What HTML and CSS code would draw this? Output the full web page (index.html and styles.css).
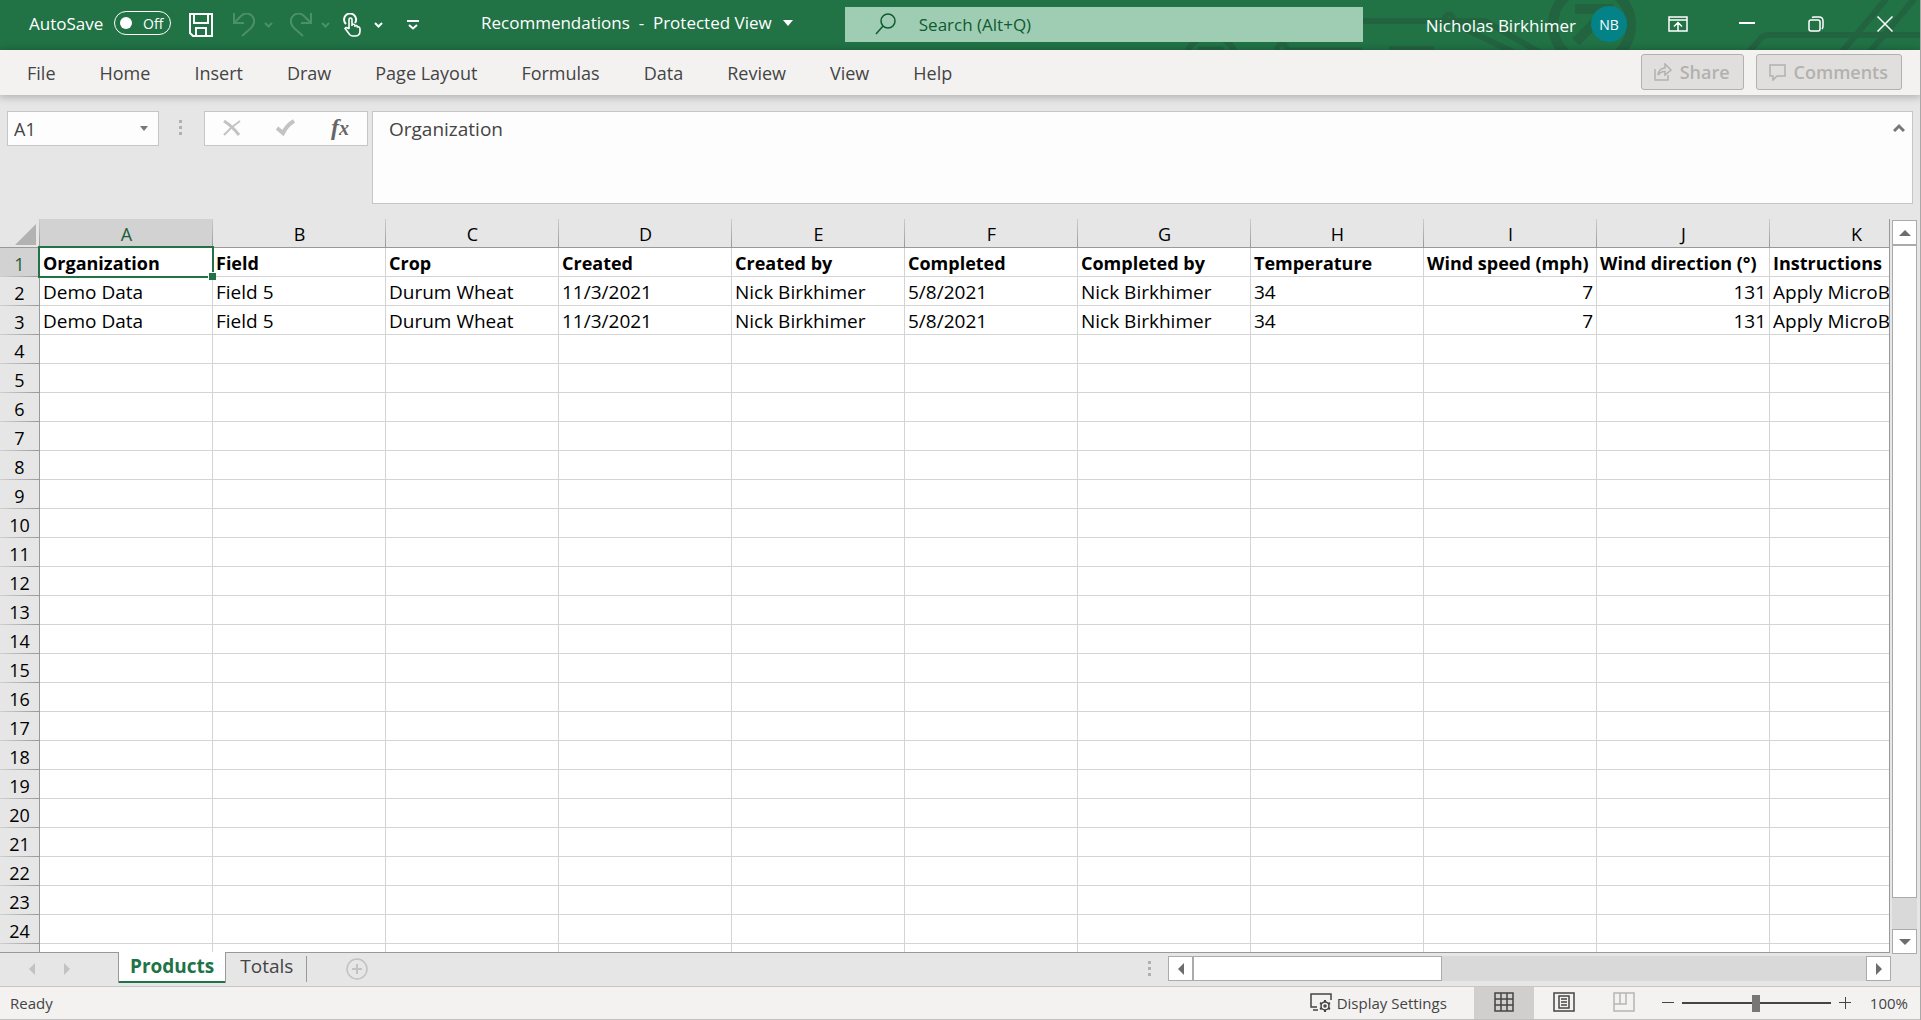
FILE: index.html
```html
<!DOCTYPE html>
<html lang="en">
<head>
<meta charset="utf-8">
<title>Recommendations - Protected View</title>
<link rel="stylesheet" href="styles.css">
</head>
<body>
<div class="app">
  <header class="titlebar">
    <svg class="circuit" width="561" height="50" viewBox="0 0 561 50" fill="none" stroke="#236440" aria-hidden="true">
      <path d="M0 21H90L160 55M90 21H126L185 55M30 49H75M-127 50A23 27 0 0 1 -73 50" stroke-width="6"/>
      <circle cx="90" cy="18" r="4" stroke-width="5"/>
      <circle cx="233" cy="25" r="39" stroke-width="10"/>
      <path d="M216 9H249V42M247 11L217 42" stroke-width="10"/>
      <path d="M390 52L402 38Q405 35 410 35H561M482 53L528 -2M510 53L556 -2" stroke-width="6"/>
    </svg>
    <svg class="circuit-low" width="180" height="8" viewBox="0 0 180 8" fill="none" stroke="#236440" aria-hidden="true">
      <path d="M5 10Q8 3 15 -2M53 10Q50 3 43 -2" stroke-width="6"/>
      <path d="M16 5H41V8H16Z" fill="#236440" stroke-width="1"/>
      <circle cx="100" cy="7" r="5" stroke-width="5"/>
      <path d="M106 7H180" stroke-width="3"/>
    </svg>
    <div class="quick">
      <label class="autosave" for="autosave">AutoSave</label>
      <span class="toggle"><input type="checkbox" id="autosave"><span class="toggle-text">Off</span></span>
      <button class="qbtn save" aria-label="Save"><svg width="24" height="24" viewBox="0 0 24 24" fill="none" stroke="#fff" stroke-width="2"><path d="M1 1H23V23H4L1 20ZM5 1V10H19V1M7 23V15H17V23"/></svg></button>
      <button class="qbtn faded" aria-label="Undo"><svg width="22" height="24" viewBox="0 0 22 24" fill="none" stroke="#4b9068" stroke-width="2"><path d="M1 0V10H11M1 10L8 3C12 -1 17 0 20 4C22 8 21 12 18 15L9 23"/></svg></button>
      <button class="qbtn" aria-label="Undo list"><svg width="9" height="6" viewBox="0 0 9 6" fill="none" stroke="#4b9068" stroke-width="2"><path d="M1 1L4.500 4.500L8 1"/></svg></button>
      <button class="qbtn redo" aria-label="Redo"><svg width="22" height="24" viewBox="0 0 22 24" fill="none" stroke="#4b9068" stroke-width="2"><path d="M21 0V10H11M21 10L14 3C10 -1 5 0 2 4C0 8 1 12 4 15L13 23"/></svg></button>
      <button class="qbtn" aria-label="Redo list"><svg width="9" height="6" viewBox="0 0 9 6" fill="none" stroke="#4b9068" stroke-width="2"><path d="M1 1L4.500 4.500L8 1"/></svg></button>
      <button class="qbtn touch" aria-label="Touch/Mouse Mode"><svg width="18" height="24" viewBox="0 0 18 24" fill="none" stroke="#fff" stroke-width="2"><path d="M3 11A6 6 0 1 1 12 10" /><path d="M6 16V6.500Q6 5 7.500 5T9 6.500V13M9 11.500Q12 10.500 12 13Q14.500 12 14.500 14Q17 13.500 17 16V18Q17 23 12 23H10Q7 23 5.500 20L2 15.500Q3 13.500 6 16" stroke-width="1.600"/></svg></button>
      <button class="qbtn touch-more" aria-label="Touch options"><svg width="9" height="6" viewBox="0 0 9 6" fill="none" stroke="#fff" stroke-width="2"><path d="M1 1L4.500 4.500L8 1"/></svg></button>
      <button class="qbtn customize" aria-label="Customize toolbar"><svg width="12" height="10" viewBox="0 0 12 10" fill="none" stroke="#fff" stroke-width="2"><path d="M0 1H12M2 5L6 8.500L10 5"/></svg></button>
    </div>
    <button class="doc-title">Recommendations&nbsp; -&nbsp; Protected View <svg width="10" height="6" viewBox="0 0 10 6" fill="#fff"><path d="M0 0H10L5 6Z"/></svg></button>
    <label class="search">
      <svg width="21" height="22" viewBox="0 0 21 22" fill="none" stroke="#0f5a2f" stroke-width="1.500"><circle cx="13" cy="8" r="7"/><path d="M8 13L1 21"/></svg>
      <input type="text" placeholder="Search (Alt+Q)" aria-label="Search">
    </label>
    <div class="account">
      <span class="user">Nicholas Birkhimer</span>
      <button class="avatar">NB</button>
      <button class="wbtn" aria-label="Ribbon display options"><svg width="20" height="16" viewBox="0 0 20 16" fill="none" stroke="#fff" stroke-width="1.500"><path d="M1 1H19V15H1ZM1 4H19M10 15V7M6 10.500L10 6.500L14 10.500"/></svg></button>
      <button class="wbtn" aria-label="Minimize"><svg width="16" height="16" viewBox="0 0 16 16" stroke="#fff" stroke-width="2"><path d="M0 7H16"/></svg></button>
      <button class="wbtn" aria-label="Restore"><svg width="16" height="16" viewBox="0 0 16 16" fill="none" stroke="#fff" stroke-width="1.500"><rect x="1" y="4" width="11" height="11" rx="2"/><path d="M4 1.500Q5 1 6 1H11Q15 1 15 5V10Q15 12 14 13"/></svg></button>
      <button class="wbtn" aria-label="Close"><svg width="16" height="16" viewBox="0 0 16 16" stroke="#fff" stroke-width="1.500"><path d="M0.500 0.500L15.500 15.500M15.500 0.500L0.500 15.500"/></svg></button>
    </div>
  </header>

  <nav class="ribbon">
    <div class="ribbon-tabs">
      <a href="#">File</a><a href="#">Home</a><a href="#">Insert</a><a href="#">Draw</a><a href="#">Page Layout</a><a href="#">Formulas</a><a href="#">Data</a><a href="#">Review</a><a href="#">View</a><a href="#">Help</a>
    </div>
    <div class="ribbon-actions">
      <button class="action" disabled><svg width="18" height="18" viewBox="0 0 18 18" fill="none" stroke="#b3b1af" stroke-width="1.500"><path d="M1 6V17H14V12M4 12Q5 5 11 5V1L17 7L11 12V8.500Q7 8 4 12Z"/></svg>Share</button>
      <button class="action" disabled><svg width="17" height="18" viewBox="0 0 17 18" fill="none" stroke="#b3b1af" stroke-width="1.500"><path d="M1 2H16V13H8L4 17V13H1Z"/></svg>Comments</button>
    </div>
  </nav>

  <section class="formula-row">
    <div class="namebox">
      <input type="text" value="A1" aria-label="Name box">
      <button aria-label="Name list"><svg width="8" height="5" viewBox="0 0 8 5" fill="#777"><path d="M0 0H8L4 5Z"/></svg></button>
    </div>
    <span class="grip"><i></i><i></i><i></i></span>
    <div class="fx">
      <button aria-label="Cancel"><svg width="18" height="18" viewBox="0 0 18 18" fill="none" stroke="#c3c3c3"><path d="M1 2Q9 7 16 16" stroke-width="3"/><path d="M17 2Q8 8 1 16" stroke-width="2"/></svg></button>
      <button aria-label="Enter"><svg width="20" height="18" viewBox="0 0 20 18" fill="none" stroke="#c3c3c3" stroke-width="4"><path d="M1 9L7 14Q11 6 18 2"/></svg></button>
      <button class="fx-label" aria-label="Insert function">f<span>x</span></button>
    </div>
    <div class="formula">
      <textarea aria-label="Formula bar">Organization</textarea>
      <button aria-label="Collapse formula bar"><svg width="12" height="9" viewBox="0 0 12 9" fill="none" stroke="#777" stroke-width="3"><path d="M1 8L6 3L11 8"/></svg></button>
    </div>
  </section>

  <main class="sheet">
    <div class="grid-view">
      <table class="grid">
        <colgroup><col class="col-head"><col span="11" class="col-data"></colgroup>
        <thead>
          <tr><th class="corner"><svg width="21" height="21" viewBox="0 0 21 21" fill="#b2b2b2"><path d="M21 0V21H0Z"/></svg></th><th class="active">A</th><th>B</th><th>C</th><th>D</th><th>E</th><th>F</th><th>G</th><th>H</th><th>I</th><th>J</th><th>K</th></tr>
        </thead>
        <tbody id="rows">
          <tr class="titles"><th class="active">1</th><td class="selected">Organization</td><td>Field</td><td>Crop</td><td>Created</td><td>Created by</td><td>Completed</td><td>Completed by</td><td>Temperature</td><td>Wind speed (mph)</td><td>Wind direction (°)</td><td>Instructions</td></tr>
          <tr><th>2</th><td>Demo Data</td><td>Field 5</td><td>Durum Wheat</td><td>11/3/2021</td><td>Nick Birkhimer</td><td>5/8/2021</td><td>Nick Birkhimer</td><td>34</td><td class="num">7</td><td class="num">131</td><td>Apply MicroB</td></tr>
          <tr><th>3</th><td>Demo Data</td><td>Field 5</td><td>Durum Wheat</td><td>11/3/2021</td><td>Nick Birkhimer</td><td>5/8/2021</td><td>Nick Birkhimer</td><td>34</td><td class="num">7</td><td class="num">131</td><td>Apply MicroB</td></tr>
        </tbody>
      </table>
    </div>
    <div class="vscroll">
      <button class="sbtn" aria-label="Scroll up"><svg width="12" height="6" viewBox="0 0 12 6" fill="#6d6d6d"><path d="M0 6L6 0L12 6Z"/></svg></button>
      <div class="track"><div class="thumb"></div></div>
      <button class="sbtn" aria-label="Scroll down"><svg width="12" height="6" viewBox="0 0 12 6" fill="#6d6d6d"><path d="M0 0L6 6L12 0Z"/></svg></button>
    </div>
  </main>

  <section class="tabs-row">
    <div class="tab-nav">
      <button aria-label="Previous sheet"><svg width="6" height="12" viewBox="0 0 6 12" fill="#c2c2c2"><path d="M6 0V12L0 6Z"/></svg></button>
      <button aria-label="Next sheet"><svg width="6" height="12" viewBox="0 0 6 12" fill="#c2c2c2"><path d="M0 0V12L6 6Z"/></svg></button>
    </div>
    <button class="sheet-tab current">Products</button>
    <button class="sheet-tab">Totals</button>
    <button class="add-sheet" aria-label="New sheet"><svg width="22" height="22" viewBox="0 0 22 22" fill="none" stroke="#c2c2c2"><circle cx="11" cy="11" r="10" stroke-width="1.500"/><path d="M6 11H16M11 6V16" stroke-width="2"/></svg></button>
    <span class="grip"><i></i><i></i><i></i></span>
    <div class="hscroll">
      <button class="sbtn" aria-label="Scroll left"><svg width="6" height="12" viewBox="0 0 6 12" fill="#6d6d6d"><path d="M6 0V12L0 6Z"/></svg></button>
      <div class="track"><div class="thumb"></div></div>
      <button class="sbtn" aria-label="Scroll right"><svg width="6" height="12" viewBox="0 0 6 12" fill="#6d6d6d"><path d="M0 0V12L6 6Z"/></svg></button>
    </div>
  </section>

  <footer class="status">
    <span class="ready">Ready</span>
    <button class="display"><svg width="22" height="20" viewBox="0 0 22 20" fill="none" stroke="#444" stroke-width="1.500"><path d="M7 14H1V1H21V7M3 17H8"/><circle cx="15" cy="13" r="4"/><circle cx="15" cy="13" r="1"/><path d="M15 7V9M15 17V19M10 10L12 11M18 15L20 16M20 10L18 11M12 15L10 16" stroke-width="2"/></svg>Display Settings</button>
    <button class="view on" aria-label="Normal view"><svg width="20" height="20" viewBox="0 0 20 20" fill="none" stroke="#444" stroke-width="1.500"><path d="M1 1H19V19H1ZM1 7H19M1 13H19M7 1V19M13 1V19"/></svg></button>
    <button class="view" aria-label="Page layout view"><svg width="22" height="20" viewBox="0 0 22 20" fill="none" stroke="#444" stroke-width="1.500"><path d="M1 1H21V19H1ZM6 4H16V16H6ZM8 7H14M8 10H14M8 13H14"/></svg></button>
    <button class="view" aria-label="Page break preview"><svg width="22" height="20" viewBox="0 0 22 20" fill="none" stroke="#b5b5b5" stroke-width="1.500"><path d="M1 1H21V19H1ZM1 12H13V1M7 1V12"/></svg></button>
    <button class="zbtn" aria-label="Zoom out"><svg width="12" height="12" viewBox="0 0 12 12" stroke="#444" stroke-width="1"><path d="M0 5.500H12"/></svg></button>
    <input class="zoom" type="range" min="0" max="200" value="100" aria-label="Zoom">
    <button class="zbtn" aria-label="Zoom in"><svg width="12" height="12" viewBox="0 0 12 12" stroke="#444" stroke-width="1"><path d="M0 5.500H12M6.500 0V12"/></svg></button>
    <button class="percent">100%</button>
  </footer>
</div>
<script src="rows.js"></script>
</body>
</html>
```

FILE: rows.js
```js
// Fills the view with empty numbered rows; the last one is cut by the sheet edge.
const body = document.getElementById("rows");
const lastRow = 24;
for (let n = 4; n <= lastRow + 1; n++) {
  const row = body.insertRow();
  const head = document.createElement("th");
  head.textContent = n <= lastRow ? n : "";
  row.appendChild(head);
  for (let c = 0; c < 11; c++) row.insertCell();
}
```

FILE: styles.css
```css
* { box-sizing: border-box; }

body {
  margin: 0;
  font-family: "Open Sans", "Noto Sans", sans-serif;
  font-size: 18px;
  color: #444;
  background: #e6e6e6;
}

button, input, textarea {
  font: inherit;
  color: inherit;
  background: none;
  border: 0;
  padding: 0;
  margin: 0;
  outline: 0;
}

svg { display: block; flex: none; }

.app {
  display: flex;
  flex-direction: column;
  height: 100vh;
  border-right: 1px solid #a8a8a8;
  overflow: hidden;
}

/* Title bar */
.titlebar {
  position: relative;
  display: flex;
  align-items: center;
  height: 50px;
  flex: none;
  background: #217346;
  color: #fff;
  font-size: 17px;
  overflow: hidden;
}
.circuit { position: absolute; right: 0; top: 0; }
.circuit-low { position: absolute; right: 558px; bottom: 0; }
.quick, .doc-title, .search, .account { position: relative; display: flex; align-items: center; }
.quick { flex: 0 0 25%; padding-left: 29px; height: 50px; }
.autosave { width: 77px; padding-bottom: 4px; white-space: nowrap; }
.toggle {
  display: flex;
  align-items: center;
  width: 57px;
  height: 24px;
  margin: 0 18px 4px 8px;
  padding: 0 5px;
  gap: 11px;
  border: 1px solid #fff;
  border-radius: 12px;
  font-size: 14px;
}
.toggle input { appearance: none; width: 12px; height: 12px; border-radius: 50%; background: #fff; }
.qbtn { height: 24px; margin-right: 9px; display: flex; align-items: center; }
.save { margin-right: 20px; }
.redo { margin-left: 8px; }
.touch { margin-left: 4px; margin-right: 13px; }
.touch-more { margin-right: 24px; }
.doc-title { flex: 0 0 19%; gap: 11px; white-space: nowrap; padding: 0 0 5px 1px; font-size: 17px; }
.search {
  flex: 0 0 27%;
  height: 35px;
  margin-bottom: 1px;
  padding: 0 0 1px 30px;
  gap: 23px;
  background: #9fcdb3;
  color: #0f5a2f;
}
.search input { flex: 1; min-width: 0; }
.search input::placeholder { color: #0f5a2f; opacity: 1; }
.account { flex: 1; justify-content: flex-end; padding-right: 1px; }
.user { white-space: nowrap; }
.avatar {
  width: 36px;
  height: 36px;
  margin: 0 16px 2px 15px;
  border-radius: 50%;
  background: #038387;
  font-size: 14px;
}
.wbtn { width: 69px; height: 48px; display: flex; align-items: center; justify-content: center; margin-bottom: 2px; }

/* Ribbon tabs */
.ribbon {
  position: relative;
  display: flex;
  justify-content: space-between;
  align-items: center;
  flex: none;
  height: 45px;
  padding: 0 18px 0 27px;
  background: #f3f2f1;
  box-shadow: 0 1px 8px 1px rgba(0, 0, 0, .25);
}
.ribbon-tabs { display: flex; gap: 44px; }
.ribbon-tabs a { color: #444; text-decoration: none; white-space: nowrap; }
.ribbon-actions { display: flex; gap: 12px; padding-bottom: 1px; }
.action {
  display: flex;
  align-items: center;
  justify-content: center;
  gap: 8px;
  height: 36px;
  padding: 0 13px 0 12px;
  border: 1px solid #b3b1af;
  border-radius: 3px;
  background: #e1dfdd;
  color: #b3b1af;
  font-weight: 600;
}

/* Formula bar */
.formula-row {
  display: flex;
  align-items: flex-start;
  flex: none;
  padding: 16px 7px 15px 7px;
}
.namebox, .fx, .formula { background: #fdfdfd; border: 1px solid #c6c6c6; display: flex; }
.namebox { width: 152px; height: 35px; padding: 0 10px 0 6px; align-items: center; }
.namebox input { flex: 1; min-width: 0; }
.grip { display: flex; flex-direction: column; gap: 3px; }
.grip i { width: 3px; height: 3px; background: #b0b0b0; }
.formula-row .grip { margin: 9px 22px 0 20px; }
.fx { width: 164px; height: 35px; align-items: center; justify-content: space-between; padding: 0 18px 2px 18px; }
.fx-label { font: italic 600 24px/28px "Liberation Serif", serif; color: #666; }
.fx-label span { font-size: 20px; }
.formula { flex: 1; height: 93px; margin-left: 4px; padding: 4px 7px 0 16px; align-items: flex-start; }
.formula textarea { flex: 1; height: 84px; resize: none; font-size: 19px; line-height: 26px; }
.formula button { margin-top: 7px; }

/* Sheet */
.sheet { display: flex; flex: 1; min-height: 0; }
.grid-view { flex: 1; min-width: 0; overflow: hidden; border-right: 1px solid #999; border-bottom: 1px solid #999; background: #fff; }
.grid { table-layout: fixed; width: 1943px; border-collapse: separate; border-spacing: 0; color: #000; font-size: 19px; }
.col-head { width: 40px; }
.col-data { width: 173px; }
.grid th { font-weight: 400; font-size: 18px; background: #e6e6e6; padding: 2px 0 0; text-align: center; line-height: 26px; }
.grid thead th {
  height: 29px;
  border-bottom: 1px solid #999;
  background: linear-gradient(#ccc, #999) right / 1px 100% no-repeat #e6e6e6;
}
.grid thead .corner { padding-right: 4px; }
.corner svg { margin-left: auto; }
.grid thead .active { background-color: #d2d2d2; color: #1b5e3a; }
.grid tbody th {
  height: 29px;
  border-right: 1px solid #999;
  background: linear-gradient(90deg, #d0d0d0, #999) bottom / 100% 1px no-repeat #e6e6e6;
}
.grid tbody .active { background-color: #d2d2d2; color: #1b5e3a; }
.grid td {
  height: 29px;
  padding: 2px 3px 0;
  line-height: 26px;
  white-space: nowrap;
  border-right: 1px solid #d4d4d4;
  border-bottom: 1px solid #d4d4d4;
}
.grid .num { text-align: right; }
.titles td { font-weight: 700; font-size: 18px; }
.selected { position: relative; }
.selected::before { content: ""; position: absolute; inset: -2px; border: 2px solid #217346; }
.selected::after {
  content: "";
  position: absolute;
  right: -4px;
  bottom: -4px;
  width: 7px;
  height: 7px;
  background: #217346;
  border: solid #fff;
  border-width: 1px 0 0 1px;
}

/* Scroll bars */
.sbtn { display: flex; align-items: center; justify-content: center; flex: none; width: 25px; height: 25px; background: #fff; border: 1px solid #ababab; }
.track { flex: 1; background: #d9d9d9; display: flex; }
.thumb { background: #fff; border: 1px solid #ababab; }
.vscroll { width: 30px; flex: none; padding: 1px 3px 0 2px; display: flex; flex-direction: column; margin-bottom: -1px; }
.vscroll .thumb { width: 100%; height: 95.5%; }
.hscroll { display: flex; width: 723px; flex: none; }
.hscroll .thumb { width: 37%; }

/* Sheet tabs */
.tabs-row { display: flex; align-items: flex-start; flex: none; height: 33px; padding-right: 29px; }
.tab-nav { display: flex; gap: 29px; width: 118px; padding: 10px 0 0 29px; }
.sheet-tab { height: 30px; padding: 0 14px 4px; font-size: 19px; line-height: 26px; }
.sheet-tab.current {
  position: relative;
  height: 31px;
  margin-top: -1px;
  padding: 0 11px 3px;
  background: #fff;
  border: solid #999;
  border-width: 0 1px;
  box-shadow: inset 0 -2px #217346;
  color: #217346;
  font-weight: 700;
}
.sheet-tab:not(.current) { background: linear-gradient(#999, #999) right 3px / 1px 26px no-repeat; }
.add-sheet { margin: 5px auto 0 39px; }
.tabs-row .grip { margin: 8px 17px 0 0; }
.hscroll { margin-top: 3px; }

/* Status bar */
.status {
  display: flex;
  align-items: stretch;
  flex: none;
  height: 34px;
  padding-right: 12px;
  border-top: 1px solid #c6c6c6;
  border-bottom: 1px solid #c0c0c0;
  background: #f3f2f1;
  font-size: 15px;
  line-height: 32px;
}
.ready { margin: 0 auto 0 10px; }
.display { display: flex; align-items: center; gap: 5px; margin-right: 27px; white-space: nowrap; }
.view { width: 60px; display: flex; align-items: center; justify-content: center; padding-bottom: 2px; }
.view.on { background: #d0cfcd; }
.zbtn { display: flex; align-items: center; margin: 0 8px; }
.zoom { width: 149px; appearance: none; background: linear-gradient(#444, #444) center / 100% 2px no-repeat; }
.zoom::-webkit-slider-thumb { appearance: none; width: 8px; height: 17px; background: #777; }
.percent { margin-left: 11px; }
```
